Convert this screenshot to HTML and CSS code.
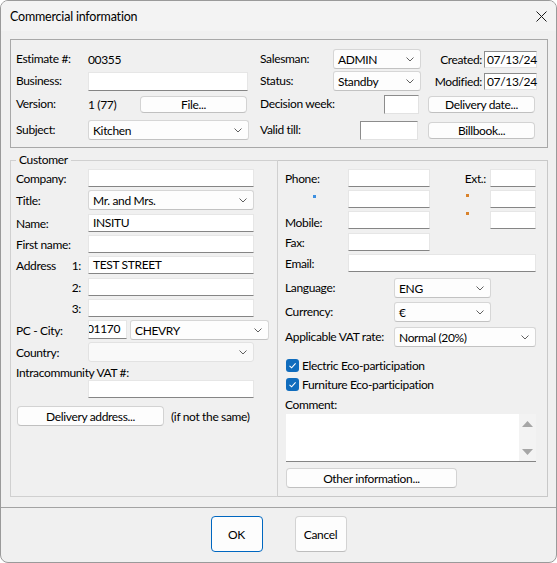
FILE: index.html
```html
<!DOCTYPE html>
<html lang="en">
<head>
  <meta charset="UTF-8" />
  <title>Commercial information</title>
  <link rel="stylesheet" href="styles.css">
</head>
<body>

<div class="window">
  <header class="titlebar">
    <span class="title">Commercial information</span>
    <svg class="close" width="11" height="11" viewBox="0 0 11 11"><path d="M0.5 0.5 L10.5 10.5 M10.5 0.5 L0.5 10.5" /></svg>
  </header>

  <main class="content">
    <!-- Estimate header -->
    <section class="top-group">
      <span class="lbl c1">Estimate #:</span>
      <span class="val c2">00355</span>
      <span class="lbl c4">Salesman:</span>
      <div class="select c5"><span>ADMIN</span><svg class="chev" width="8" height="5" viewBox="0 0 8 5"><polyline points="0.5,0.5 4,4 7.5,0.5" /></svg></div>
      <div class="date-pair c7"><span>Created:</span><div class="sunken date">07/13/24</div></div>

      <span class="lbl c1">Business:</span>
      <div class="field c2 business"></div>
      <span class="lbl c4">Status:</span>
      <div class="select c5"><span>Standby</span><svg class="chev" width="8" height="5" viewBox="0 0 8 5"><polyline points="0.5,0.5 4,4 7.5,0.5" /></svg></div>
      <div class="date-pair c7"><span>Modified:</span><div class="sunken date">07/13/24</div></div>

      <span class="lbl c1">Version:</span>
      <div class="version c2"><span>1 (77)</span><button class="btn file-btn">File...</button></div>
      <span class="lbl c4 nowrap">Decision week:</span>
      <div class="sunken c5 week"></div>
      <button class="btn c7 side-btn">Delivery date...</button>

      <span class="lbl c1">Subject:</span>
      <div class="select c2 subject"><span>Kitchen</span><svg class="chev" width="8" height="5" viewBox="0 0 8 5"><polyline points="0.5,0.5 4,4 7.5,0.5" /></svg></div>
      <span class="lbl c4">Valid till:</span>
      <div class="sunken c5 valid"></div>
      <button class="btn c7 side-btn">Billbook...</button>
    </section>

    <!-- Customer -->
    <section class="customer">
      <fieldset class="cust-left">
        <legend>Customer</legend>
        <div class="cust-grid">
          <span class="lbl">Company:</span>
          <div class="field"></div>

          <span class="lbl tall">Title:</span>
          <div class="select"><span>Mr. and Mrs.</span><svg class="chev" width="8" height="5" viewBox="0 0 8 5"><polyline points="0.5,0.5 4,4 7.5,0.5" /></svg></div>

          <span class="lbl">Name:</span>
          <div class="field">INSITU</div>

          <span class="lbl">First name:</span>
          <div class="field"></div>

          <span class="lbl addr"><span>Address</span><span>1:</span></span>
          <div class="field">TEST STREET</div>

          <span class="lbl addr"><span></span><span>2:</span></span>
          <div class="field"></div>

          <span class="lbl addr"><span></span><span>3:</span></span>
          <div class="field"></div>

          <span class="lbl mid">PC - City:</span>
          <div class="pc-city">
            <div class="field postal"><span>01170</span></div>
            <div class="select city"><span>CHEVRY</span><svg class="chev" width="8" height="5" viewBox="0 0 8 5"><polyline points="0.5,0.5 4,4 7.5,0.5" /></svg></div>
          </div>

          <span class="lbl mid">Country:</span>
          <div class="select disabled"><span></span><svg class="chev" width="8" height="5" viewBox="0 0 8 5"><polyline points="0.5,0.5 4,4 7.5,0.5" /></svg></div>

          <span class="lbl full vat-lbl">Intracommunity VAT #:</span>

          <div class="field c2"></div>

          <div class="full delivery">
            <button class="btn delivery-btn">Delivery address...</button>
            <span>(if not the same)</span>
          </div>
        </div>
      </fieldset>

      <div class="cust-right">
        <span class="lbl r1">Phone:</span>
        <div class="field r2"></div>
        <span class="lbl r3 ext">Ext.:</span>
        <div class="field r4"></div>

        <span class="r1 dot-cell phone-dot"><i class="dot blue"></i></span>
        <div class="field r2"></div>
        <span class="r3 dot-cell ext-dot"><i class="dot orange"></i></span>
        <div class="field r4"></div>

        <span class="lbl r1 low">Mobile:</span>
        <div class="field r2"></div>
        <span class="r3 dot-cell ext-dot first"><i class="dot orange"></i></span>
        <div class="field r4"></div>

        <span class="lbl r1">Fax:</span>
        <div class="field r2"></div>

        <span class="lbl r1">Email:</span>
        <div class="field email"></div>

        <div class="line full">
          <span class="lbl wide">Language:</span>
          <div class="select lang"><span>ENG</span><svg class="chev" width="8" height="5" viewBox="0 0 8 5"><polyline points="0.5,0.5 4,4 7.5,0.5" /></svg></div>
        </div>

        <div class="line full">
          <span class="lbl wide">Currency:</span>
          <div class="select lang"><span>€</span><svg class="chev" width="8" height="5" viewBox="0 0 8 5"><polyline points="0.5,0.5 4,4 7.5,0.5" /></svg></div>
        </div>

        <div class="line full">
          <span class="lbl wide">Applicable VAT rate:</span>
          <div class="select rate"><span>Normal (20%)</span><svg class="chev" width="8" height="5" viewBox="0 0 8 5"><polyline points="0.5,0.5 4,4 7.5,0.5" /></svg></div>
        </div>

        <label class="check full">
          <svg width="13" height="13" viewBox="0 0 13 13"><rect width="13" height="13" rx="3" fill="#0f6cbd" /><polyline points="3.5,6.8 5.6,8.8 9.6,4.3" fill="none" stroke="#fff" stroke-width="1.1" /></svg>
          <span>Electric Eco-participation</span>
        </label>

        <label class="check full">
          <svg width="13" height="13" viewBox="0 0 13 13"><rect width="13" height="13" rx="3" fill="#0f6cbd" /><polyline points="3.5,6.8 5.6,8.8 9.6,4.3" fill="none" stroke="#fff" stroke-width="1.1" /></svg>
          <span>Furniture Eco-participation</span>
        </label>

        <span class="lbl full comment-lbl">Comment:</span>

        <div class="memo full">
          <div class="memo-text"></div>
          <div class="scroll">
            <svg width="11" height="6" viewBox="0 0 11 6"><polygon points="0,6 5.5,0 11,6" /></svg>
            <svg width="11" height="6" viewBox="0 0 11 6"><polygon points="0,0 11,0 5.5,6" /></svg>
          </div>
        </div>

        <div class="full">
          <button class="btn other-btn">Other information...</button>
        </div>
      </div>
    </section>
  </main>

  <footer class="footer">
    <button class="dlg-btn default">OK</button>
    <button class="dlg-btn">Cancel</button>
  </footer>
</div>

</body>
</html>
```

FILE: styles.css
```css
* {
  box-sizing: border-box;
}

body {
  margin: 0;
  font-family: Lato, "Noto Sans", sans-serif;
  font-size: 12px;
  letter-spacing: -0.35px;
  color: #000;
  background: #fff;
}

button {
  font: inherit;
  letter-spacing: inherit;
  color: #000;
  padding: 0;
  cursor: pointer;
}

.window {
  width: 557px;
  height: 563px;
  border: 1px solid #9a9a9a;
  border-radius: 8px;
  background: #f0f0f0;
  display: flex;
  flex-direction: column;
  overflow: hidden;
}

.titlebar {
  height: 30px;
  background: #f3f3f3;
  display: flex;
  align-items: center;
  justify-content: space-between;
  padding: 0 9px 0 9px;
}

.title {
  font-size: 12.5px;
  letter-spacing: -0.2px;
}

.close path {
  stroke: #1a1a1a;
  stroke-width: 1;
}

.content {
  padding: 8px 8px 0 9px;
}

/* ---------- generic controls ---------- */

.lbl {
  line-height: 18px;
  white-space: nowrap;
}

.field {
  height: 18px;
  background: #fff;
  border: 1px solid #e6e6e6;
  border-bottom-color: #858585;
  padding: 0 4px;
  line-height: 16px;
  overflow: hidden;
  white-space: nowrap;
}

.sunken {
  height: 19px;
  background: #fff;
  border: 1px solid;
  border-color: #8c8c8c #e2e2e2 #e2e2e2 #8c8c8c;
  padding: 0 2px;
  line-height: 16px;
}

.select {
  height: 20px;
  background: #fdfdfd;
  border: 1px solid #d6d6d6;
  border-bottom-color: #c2c2c2;
  border-radius: 3px;
  display: flex;
  align-items: center;
  justify-content: space-between;
  padding: 0 6px 0 4px;
  white-space: nowrap;
}

.chev polyline {
  fill: none;
  stroke: #606060;
  stroke-width: 1;
}

.select.disabled {
  background: #f9f9f9;
  border-color: #e2e2e2;
}

.btn {
  height: 18px;
  background: #fdfdfd;
  border: 1px solid #d3d3d3;
  border-bottom-color: #c0c0c0;
  border-radius: 4px;
  line-height: 15px;
}

/* ---------- top group ---------- */

.top-group {
  height: 109px;
  border: 1px solid #a8a8a8;
  padding: 8px 0 0 5px;
  display: grid;
  grid-template-columns: 72px 161px 11px 73px 88px 7px 109px;
  grid-template-rows: 22px 22px 24px 28px;
  align-items: center;
}

.c1 { grid-column: 1; }
.c2 { grid-column: 2; }
.c4 { grid-column: 4; }
.c5 { grid-column: 5; }
.c7 { grid-column: 7; }

.date-pair {
  display: flex;
  justify-content: flex-end;
  align-items: center;
  gap: 2px;
}

.sunken.date {
  width: 53px;
  height: 17px;
  line-height: 15px;
}

.business {
  width: 160px;
  height: 19px;
}

.version {
  display: flex;
  justify-content: space-between;
  align-items: center;
  padding-right: 2px;
}

.file-btn {
  width: 107px;
  height: 17px;
}

.week {
  width: 35px;
  justify-self: end;
  margin-right: 2px;
}

.valid {
  width: 58px;
  justify-self: end;
  margin-right: 3px;
}

.side-btn {
  width: 107px;
  height: 17px;
}

/* ---------- customer ---------- */

.customer {
  display: flex;
  margin-top: 4px;
}

.cust-left {
  width: 268px;
  height: 345px;
  margin: 0;
  border: 1px solid #d0d0d0;
  padding: 1px 0 0 5px;
}

.cust-left legend {
  padding: 0 3px;
  line-height: 16px;
}

.cust-grid {
  display: grid;
  grid-template-columns: 72px 166px;
  grid-template-rows: 21px 24px 21px 21px 22px 21px 21px 22px 23px 15px 26px 20px;
  align-items: start;
}

.cust-grid .lbl {
  padding-top: 1px;
}

.lbl.tall,
.lbl.mid {
  line-height: 20px;
}

.addr {
  display: flex;
  justify-content: space-between;
  padding-right: 7px;
}

.pc-city {
  display: flex;
  gap: 3px;
}

.postal {
  width: 39px;
  height: 19px;
  padding: 0;
  flex: none;
}

.postal span {
  display: block;
  margin-left: -2px;
}

.city {
  width: 139px;
  flex: none;
}

.full {
  grid-column: 1 / -1;
}

.lbl.vat-lbl {
  line-height: 15px;
  padding-top: 0;
  align-self: end;
}

.delivery {
  display: flex;
  align-items: center;
  gap: 7px;
  white-space: nowrap;
}

.delivery-btn {
  width: 147px;
  height: 20px;
  margin-left: 1px;
  flex: none;
}

.cust-right {
  width: 270px;
  height: 337px;
  margin-top: 8px;
  border: 1px solid #c8c8c8;
  border-left: none;
  padding: 8px 0 0 7px;
  display: grid;
  grid-template-columns: 63px 82px 60px 46px;
  grid-template-rows: 21px 21px 22px 21px 24px 24px 25px 32px 19px 19px 17px 54px 20px;
  align-items: start;
}

.r1 { grid-column: 1; }
.r2 { grid-column: 2; }
.r3 { grid-column: 3; }
.r4 { grid-column: 4; }

.cust-right > .lbl {
  padding-top: 1px;
}

.ext {
  text-align: right;
  padding-right: 4px;
}

.cust-right > .lbl.low {
  padding-top: 3px;
}

.dot-cell {
  display: block;
  height: 18px;
}

.dot {
  display: block;
  width: 3px;
  height: 3px;
}

.dot.blue {
  background: #3d8fe0;
}

.dot.orange {
  background: #d9822b;
}

.phone-dot {
  padding: 5px 0 0 28px;
}

.ext-dot {
  padding: 4px 0 0 36px;
}

.ext-dot.first {
  padding-top: 1px;
}

.email {
  grid-column: 2 / 5;
}

.line {
  display: flex;
  align-items: center;
}

.lbl.wide {
  width: 109px;
  line-height: 20px;
}

.lang {
  width: 97px;
}

.rate {
  width: 142px;
}

.check {
  display: flex;
  align-items: center;
  gap: 3px;
  padding-left: 1px;
  height: 13px;
}

.check svg {
  flex: none;
}

.cust-right > .lbl.comment-lbl {
  line-height: 15px;
  padding-top: 0;
}

.memo {
  width: 250px;
  height: 48px;
  margin-left: 1px;
  display: flex;
  background: #fff;
  border-bottom: 1px solid #858585;
}

.memo-text {
  flex: 1;
}

.scroll {
  width: 17px;
  background: #f3f3f3;
  display: flex;
  flex-direction: column;
  justify-content: space-between;
  align-items: center;
  padding: 7px 0 6px;
}

.scroll polygon {
  fill: #a6a6a6;
}

.other-btn {
  width: 171px;
  height: 20px;
  margin-left: 1px;
}

/* ---------- footer ---------- */

.footer {
  margin-top: auto;
  height: 55px;
  border-top: 1px solid #a3a3a3;
  display: flex;
  justify-content: center;
  align-items: flex-start;
  gap: 32px;
  padding-top: 8px;
}

.dlg-btn {
  width: 52px;
  height: 36px;
  background: #fdfdfd;
  border: 1px solid #d3d3d3;
  border-bottom-color: #bdbdbd;
  border-radius: 4px;
}

.dlg-btn.default {
  border: 1px solid #0067c0;
}
```
